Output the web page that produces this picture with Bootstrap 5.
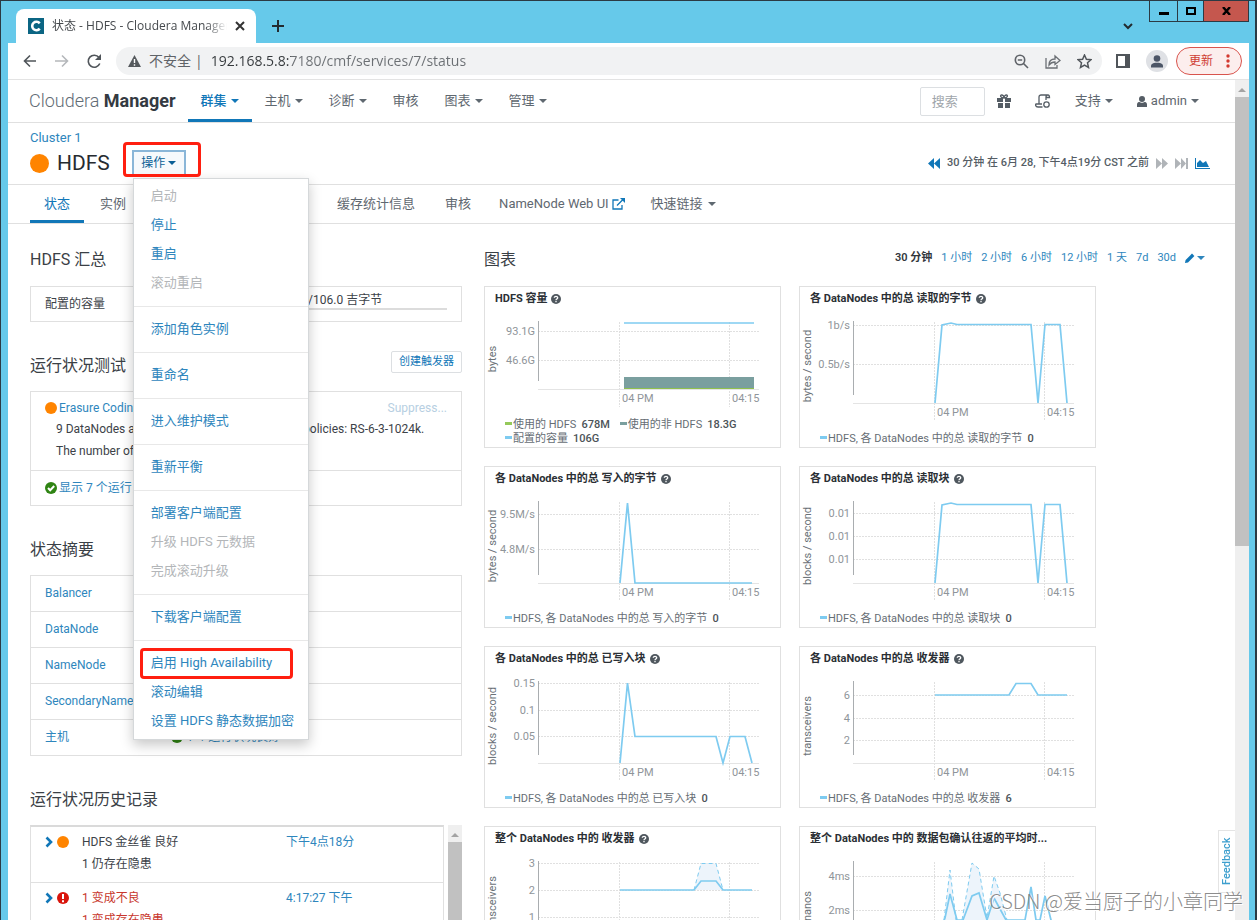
<!DOCTYPE html>
<html lang="zh-CN">
<head>
<meta charset="utf-8">
<meta name="viewport" content="width=device-width, initial-scale=1">
<title>状态 - HDFS - Cloudera Manager</title>
<link href="https://cdn.jsdelivr.net/npm/bootstrap@5.3.0/dist/css/bootstrap.min.css" rel="stylesheet">
<style>
  :root { --sky:#66c9ea; --cm-blue:#1177b8; --cm-link:#2e86bd; --line:#e0e0e0; --ink:#3c4248; --soft:#5f6870; }
  html, body { height:100%; }
  body { font-family:Roboto,"Noto Sans CJK SC",sans-serif; font-size:13px; line-height:20px; color:var(--ink); overflow:hidden; background:#1d2b3a; }
  a { color:var(--cm-link); text-decoration:none; }
  svg { display:block; flex:none; }
  button { font-family:inherit; }
  .win { height:100vh; background:var(--sky); border:solid #2b3a44; border-width:1px 2px 0 1px; padding:0 6px 0 7px; overflow:hidden; }
  .titlebar { height:42px; }
  .tab { width:240px; height:34px; background:#fff; border-radius:8px 8px 0 0; margin-left:8px; padding:0 11px 0 12px; font-family:"Open Sans","Noto Sans CJK SC",sans-serif; font-size:12px; color:#45494d; }
  .tab-title { overflow:hidden; white-space:nowrap; -webkit-mask-image:linear-gradient(90deg,#000 88%,transparent); mask-image:linear-gradient(90deg,#000 88%,transparent); }
  .plain { border:0; background:none; padding:0; color:inherit; line-height:1; }
  .winctl button { width:28px; height:21px; border:1px solid #2b3a44; border-top:0; border-right:0; background:none; padding:0; display:flex; align-items:center; justify-content:center; }
  .winctl .max-win { width:26px; }
  .winctl .close-win { width:46px; background:#c5574e; border-right:1px solid #2b3a44; }
  .toolbar { height:37px; background:#fff; border-bottom:1px solid #e3e3e3; color:#5f6368; padding:0 7px 0 15px; }
  .nav-btns { gap:18px; }
  .omnibox { height:28px; border-radius:14px; background:#f1f2f3; padding:0 10px 0 12px; margin:0 14px 0 14px; font-family:"Open Sans","Noto Sans CJK SC",sans-serif; font-size:14px; }
  .omnibox input { border:0; background:linear-gradient(90deg,#34383b 80px,#6b6f73 80px) text; -webkit-background-clip:text; background-clip:text; color:#55595d; -webkit-text-fill-color:transparent; padding:0; outline:0; min-width:0; }
  .avatar { width:22px; height:22px; border-radius:50%; background:#dfe1e5; }
  .update { height:28px; border:1px solid #d9544d; border-radius:14px; background:#fceeed; color:#cf3d34; font-size:12px; padding:0 11px 0 12px; gap:13px; }
  .page-area { height:calc(100vh - 80px); background:#fff; }
  .sheet { min-width:0; overflow:hidden; }
  .scroller { background:#efefef; width:14px; flex:none; }
  .scroller i { display:block; margin:5px 0 0 0; background:#c1c1c1; }
  .caret::after { content:""; display:inline-block; border:4px solid transparent; border-top-color:currentColor; border-bottom:0; vertical-align:2px; margin-left:5px; }
  .topnav { height:43px; border-bottom:1px solid var(--line); padding:0 36px 0 21px; }
  .brand { font-size:18px; color:#626c75; font-weight:300; margin-right:12px; }
  .brand b { color:#343a42; font-weight:700; }
  .topnav .nav-link, .subnav .nav-link { color:var(--soft); white-space:nowrap; border-bottom:3px solid transparent; }
  .topnav .nav-link { padding:11px 13px 8px; height:42px; }
  .topnav .caret::after { margin-left:4px; }
  .topnav .active, .subnav .active { color:var(--cm-blue); border-bottom-color:var(--cm-blue); }
  .topnav .nav-link.active { font-weight:500; }
  .search { width:65px; height:29px; border:1px solid #dcdfe2; border-radius:2px; padding:0 11px; font-size:13px; }
  .search::placeholder { color:#a0a6ab; }
  .util { color:var(--soft); }
  .svc-head { height:62px; border-bottom:1px solid var(--line); padding:5px 25px 0 22px; }
  .svc-row { margin-top:2px; }
  .dot { display:inline-block; border-radius:50%; background:#ff8400; flex:none; }
  .dot-lg { width:19px; height:19px; }
  .dot-sm { width:12px; height:12px; }
  .svc-title { font-size:21px; line-height:24px; font-weight:400; color:#262b30; margin:0 0 0 8px; }
  .act { height:26px; width:54px; border:2px solid #8ab6d8; background:#f6f9fc; color:#0b5f96; font-size:12px; line-height:20px; padding:0; margin-left:22px; white-space:nowrap; }
  .act::after { margin-left:3px; }
  .act-wrap { position:relative; }
  .mark-red { position:absolute; border:3px solid #ff1f10; border-radius:4px; pointer-events:none; z-index:1100; }
  .mark-act { left:13px; right:-15px; top:-8px; height:35px; }
  .mark-ha { left:6px; right:15px; top:-1px; bottom:-1px; }
  .act-menu { display:block; position:absolute; left:23px; top:28px; width:176px; padding:3px 0; margin:0; border:1px solid #d5d8da; border-radius:0; font-size:13px; box-shadow:0 5px 12px rgba(0,0,0,.22); }
  .act-menu .dropdown-item { color:var(--cm-link); padding:4px 17px 5px; line-height:20px; }
  .act-menu .disabled { color:#b3b6b9; }
  .act-menu .dropdown-divider { margin:8px 0; border-color:#e8e8e8; opacity:1; }
  .span-now { font-size:11px; font-weight:500; color:#555d65; gap:7px; padding-top:25px; }
  .subnav { height:39px; border-bottom:1px solid var(--line); padding-left:22px; column-gap:2px; }
  .subnav .nav-link { padding:9px 14px 6px; height:38px; }
  .subnav .ext { padding-left:12px; padding-right:10px; }
  .ext svg { margin:4px 0 0 3px; }
  .cols { display:grid; grid-template-columns:minmax(0,432fr) minmax(0,726fr); column-gap:22px; padding:0 25px 0 22px; }
  .sec { font-size:16px; line-height:24px; font-weight:400; margin:0; color:#3a4046; }
  .sec-row { height:62px; padding-top:24px; }
  .sec-row-next { height:69px; padding-bottom:13px; }
  .pane { border:1px solid var(--line); font-size:12px; }
  .cap { height:36px; padding:0 14px; }
  .capbar { height:2px; background:#dcdcdc; margin-top:-1px; }
  .cap-val { width:208px; line-height:18px; }
  .trig { border:1px solid #dcdfe2; border-radius:2px; background:#fff; color:var(--cm-blue); font-size:11px; height:22px; padding:0 7px; line-height:18px; margin-bottom:5px; }
  .tests > div { padding:6px 14px 8px; }
  .tests > div + div { border-top:1px solid var(--line); height:35px; padding:6px 14px; }
  .tests p { line-height:22px; margin:0; padding-left:11px; white-space:nowrap; }
  .tests .dot-sm, .tests svg { margin-right:2px; }
  .suppress { color:#b7cfe2; }
  .roles { margin:0; font-size:12px; border:1px solid var(--line); table-layout:fixed; }
  .roles td, .roles th { height:36px; padding:7px 14px 8px; font-weight:400; border-bottom:1px solid var(--line); }
  .roles tr > :first-child { width:126px; }
  .events { border:1px solid var(--line); border-top:2px solid #dadada; font-size:12px; line-height:22px; }
  .events > div { padding:4px 14px 7px; height:56px; border-bottom:1px solid var(--line); }
  .ev-icons { width:37px; padding-top:5px; }
  .ev-text { width:204px; }
  .bad { color:#c8372d; }
  .tiles { gap:18px; }
  .tile { flex:0 0 297px; height:162px; border:1px solid var(--line); overflow:hidden; }
  .tile h3 { font-size:11px; line-height:24px; height:24px; margin:0; padding-left:10px; font-weight:700; color:#2b3035; }
  .tile svg text { font-size:11px; fill:#8f959a; }
  .tile svg .unit { fill:#6b7278; }
  .legend-row { font-size:11px; line-height:14px; padding:1px 8px 0 20px; color:#666d74; flex-wrap:wrap; column-gap:10px; }
  .legend-row i { width:7px; height:3px; display:inline-block; margin-right:1px; vertical-align:3px; }
  .legend-row b { margin-left:5px; font-weight:500; color:#4c5358; }
  .ranges { font-size:11px; gap:9px; padding-right:5px; }
  .ranges .caret::after { margin-left:2px; }
  .ranges strong { font-weight:600; color:#32373c; }
  .feedback { position:absolute; right:22px; top:830px; width:17px; height:63px; border:1px solid #e4e4e4; border-left:0; background:#fff; color:#3d9fce; font-size:11px; font-weight:500; writing-mode:vertical-rl; transform:rotate(180deg); padding:0; line-height:16px; text-align:center; }
  .watermark { position:absolute; right:14px; bottom:6px; font:300 20px/26px "Noto Sans CJK SC",sans-serif; color:rgba(110,110,110,.8); text-shadow:1px 1px 0 #fff; white-space:nowrap; }
</style>
</head>
<body>
<div class="win">
  <header class="titlebar d-flex">
    <div class="tab d-flex align-items-center align-self-end">
      <svg width="16" height="16" viewBox="0 0 16 16"><rect width="16" height="16" fill="#0b6583"/><path d="M11.7 10.6A4.2 4.2 0 1 1 11.7 5.4" fill="none" stroke="#fff" stroke-width="2.6"/></svg>
      <span class="tab-title flex-fill ms-2">状态 - HDFS - Cloudera Manager</span>
      <button class="plain ms-2" aria-label="关闭标签页"><svg width="10" height="10"><path d="M1 1l8 8M9 1L1 9" stroke="#333" stroke-width="2"/></svg></button>
    </div>
    <button class="plain ms-3 pt-2" aria-label="新标签页"><svg width="12" height="12"><path d="M6 0v12M0 6h12" stroke="#222b30" stroke-width="2"/></svg></button>
    <button class="plain ms-auto me-3 pt-2" aria-label="搜索标签页"><svg width="10" height="7"><path d="M1 1l4 4 4-4" fill="none" stroke="#222b30" stroke-width="2"/></svg></button>
    <div class="winctl d-flex align-items-start">
      <button aria-label="最小化"><svg width="10" height="8"><rect y="5" width="10" height="3"/></svg></button>
      <button class="max-win" aria-label="最大化"><svg width="10" height="8"><rect x="1" y="1" width="8" height="6" fill="none" stroke="#000" stroke-width="2"/></svg></button>
      <button class="close-win" aria-label="关闭"><svg width="9" height="8"><path d="M1 0l7 8M8 0L1 8" stroke="#000" stroke-width="2.4"/></svg></button>
    </div>
  </header>
  <div class="toolbar d-flex align-items-center">
    <div class="nav-btns d-flex align-items-center">
      <button class="plain" aria-label="后退"><svg width="14" height="14" fill="none" stroke="#50555a" stroke-width="1.6"><path d="M13 7H2M7 1.500L1.500 7 7 12.500"/></svg></button>
      <button class="plain" aria-label="前进"><svg width="14" height="14" fill="none" stroke="#b5b8bb" stroke-width="1.600"><path d="M0 7h12M7 1.500L12.500 7 7 12.500"/></svg></button>
      <button class="plain" aria-label="刷新"><svg width="15" height="15" fill="none" stroke="#50555a" stroke-width="1.600"><path d="M12.800 9.500A6 6 0 1 1 12 3.500"/><path d="M14 0v6H8z" fill="#50555a" stroke="none"/></svg></button>
    </div>
    <div class="omnibox d-flex align-items-center flex-fill">
      <svg width="13" height="12"><path d="M6.500 0L13 12H0z" fill="#55595d"/><path d="M6.500 4v4M6.500 9.300v1.400" stroke="#fff" stroke-width="1.400"/></svg>
      <span class="ms-2">不安全</span><span class="mx-1">|</span>
      <input class="flex-fill ms-1" aria-label="地址" value="192.168.5.8:7180/cmf/services/7/status">
      <svg width="15" height="15" fill="none" stroke="#5f6368" stroke-width="1.600"><circle cx="6" cy="6" r="4.700"/><path d="M9.500 9.500L14 14M3.800 6h4.400"/></svg>
      <svg class="ms-3" width="16" height="15" fill="none" stroke="#6b6f74" stroke-width="1.300"><path d="M1 4v10h11v-3M4 11c0-4 2-6 6-6V2l5 4.500-5 4V8C7 8 5.500 9 4 11z"/></svg>
      <svg class="ms-3" width="15" height="15" viewBox="0 0 15 15"><path d="M7.500 1l1.900 4.300 4.600.4-3.500 3.100 1 4.600-4-2.400-4 2.400 1-4.600L1 5.700l4.600-.4z" fill="none" stroke="#50555a" stroke-width="1.500"/></svg>
    </div>
    <svg width="14" height="14"><rect x="1" y="1" width="12" height="12" fill="none" stroke="#50555a" stroke-width="2"/><rect x="9" y="1" width="4" height="12" fill="#50555a"/></svg>
    <span class="avatar ms-3 me-2 d-flex align-items-center justify-content-center"><svg width="14" height="13" fill="#4b5566"><circle cx="7" cy="3.500" r="3.300"/><path d="M1 12.500V11c0-3 4-3.300 6-3.300s6 .3 6 3.300v1.500z"/></svg></span>
    <button class="update d-flex align-items-center">更新 <svg width="4" height="14" fill="#d33a30"><circle cx="2" cy="2" r="1.700"/><circle cx="2" cy="7" r="1.700"/><circle cx="2" cy="12" r="1.700"/></svg></button>
  </div>
  <div class="page-area d-flex">
    <main class="sheet flex-fill">
      <nav class="topnav d-flex align-items-center">
        <a class="brand text-nowrap" href="#">Cloudera <b>Manager</b></a>
        <div class="nav flex-nowrap">
          <a class="nav-link caret active" href="#">群集</a><a class="nav-link caret" href="#">主机</a><a class="nav-link caret" href="#">诊断</a><a class="nav-link" href="#">审核</a><a class="nav-link caret" href="#">图表</a><a class="nav-link caret" href="#">管理</a>
        </div>
        <input class="search ms-auto" type="search" placeholder="搜索" aria-label="搜索">
        <a href="#" class="util ms-2 ps-1" aria-label="新功能"><svg width="14" height="14" fill="#555d65"><path d="M0 4h6v4H0zM8 4h6v4H8zM1 9h5v5H1zM8 9h5v5H8z"/><path d="M7 4C3 4 3 1 4.500 1S7 2.500 7 4c0-1.500 1-3 2.500-3S11 4 7 4z" fill="none" stroke="#555d65" stroke-width="1.300"/></svg></a>
        <a href="#" class="util ms-4" aria-label="运行命令"><svg width="16" height="15" fill="none" stroke="#555d65" stroke-width="1.300"><path d="M4 10V3c0-1.500 1-2 2-2h7c-1.500 0-2 1-2 2v3M11 3.500h3.500C14.500 2 14 1 13 1M7.500 13H3c-3 0-2.500-3-2-3h6"/><circle cx="11.500" cy="10.500" r="2.700"/></svg></a>
        <a href="#" class="util caret ms-4 text-nowrap">支持</a>
        <a href="#" class="util caret ms-4 text-nowrap d-flex align-items-center"><svg class="me-1" width="10" height="11" fill="#555d65"><circle cx="5" cy="3" r="3"/><path d="M0 11V8.500C0 6.500 1.500 6 2.500 6c1 1 4 1 5 0 1 0 2.500.5 2.500 2.500V11z"/></svg>admin</a>
      </nav>
      <div class="svc-head d-flex justify-content-between">
        <div>
          <a href="#" class="d-block">Cluster 1</a>
          <div class="svc-row d-flex align-items-center">
            <span class="dot dot-lg"></span><h1 class="svc-title">HDFS</h1>
            <div class="act-wrap">
              <button class="act caret" aria-expanded="true">操作</button>
              <span class="mark-red mark-act"></span>
              <div class="dropdown-menu act-menu">
                <a class="dropdown-item disabled" href="#">启动</a>
                <a class="dropdown-item" href="#">停止</a>
                <a class="dropdown-item" href="#">重启</a>
                <a class="dropdown-item disabled" href="#">滚动重启</a>
                <hr class="dropdown-divider">
                <a class="dropdown-item" href="#">添加角色实例</a>
                <hr class="dropdown-divider">
                <a class="dropdown-item" href="#">重命名</a>
                <hr class="dropdown-divider">
                <a class="dropdown-item" href="#">进入维护模式</a>
                <hr class="dropdown-divider">
                <a class="dropdown-item" href="#">重新平衡</a>
                <hr class="dropdown-divider">
                <a class="dropdown-item" href="#">部署客户端配置</a>
                <a class="dropdown-item disabled" href="#">升级 HDFS 元数据</a>
                <a class="dropdown-item disabled" href="#">完成滚动升级</a>
                <hr class="dropdown-divider">
                <a class="dropdown-item" href="#">下载客户端配置</a>
                <hr class="dropdown-divider">
                <div class="position-relative"><a class="dropdown-item" href="#">启用 High Availability</a><span class="mark-red mark-ha"></span></div>
                <a class="dropdown-item" href="#">滚动编辑</a>
                <a class="dropdown-item" href="#">设置 HDFS 静态数据加密</a>
              </div>
            </div>
          </div>
        </div>
        <div class="span-now d-flex align-items-center align-self-start">
          <svg width="12" height="11" fill="#1177b8"><path d="M6 0v11L0 5.500zM12 0v11L6 5.500z"/></svg>
          <span>30 分钟 在 6月 28, 下午4点19分 CST 之前</span>
          <svg width="12" height="11" fill="#b0b4b8"><path d="M0 0v11l6-5.500zM6 0v11l6-5.500z"/></svg>
          <svg width="13" height="11" fill="#b0b4b8"><path d="M0 0v11l6-5.500zM6 0v11l5-5.500zM11 0h2v11h-2z"/></svg>
          <svg width="15" height="11" fill="#1177b8"><path d="M0 0h1v10h14v1H0zM2 9V5l3-3 3 3 3-2 3 6z"/></svg>
        </div>
      </div>
      <nav class="subnav nav flex-nowrap">
        <a class="nav-link active" href="#">状态</a><a class="nav-link" href="#">实例</a><a class="nav-link" href="#">配置</a><a class="nav-link" href="#">命令</a><a class="nav-link" href="#">图表库</a><a class="nav-link" href="#">缓存统计信息</a><a class="nav-link" href="#">审核</a>
        <a class="nav-link ext d-flex" href="#">NameNode Web UI <svg width="13" height="12" fill="none" stroke="#1177b8" stroke-width="1.300"><path d="M6.500 2H1v9h9V7M5 7.500L11.500 1"/><path d="M8 0h5v5z" fill="#1177b8" stroke="none"/></svg></a>
        <a class="nav-link caret" href="#">快速链接</a>
      </nav>
      <div class="cols">
        <section>
          <div class="sec-row"><h2 class="sec">HDFS 汇总</h2></div>
          <div class="pane cap d-flex justify-content-between align-items-center"><span>配置的容量</span><div class="cap-val align-self-start pt-1"><span>678.4 兆字节/106.0 吉字节</span><div class="capbar"></div></div></div>
          <div class="sec-row-next d-flex justify-content-between align-items-end"><h2 class="sec">运行状况测试</h2><button class="trig">创建触发器</button></div>
          <div class="pane tests">
            <div>
              <div class="d-flex align-items-center"><span class="dot dot-sm"></span><a href="#">Erasure Coding 策略验证测试</a><a href="#" class="suppress ms-auto">Suppress...</a></div>
              <p>9 DataNodes are required with the enabled EC policies: RS-6-3-1024k.</p>
              <p>The number of DataNodes is 3.</p>
            </div>
            <div class="d-flex align-items-center"><svg width="12" height="12"><circle cx="6" cy="6" r="6" fill="#2f8413"/><path d="M3 6l2.200 2.300L9.200 4" fill="none" stroke="#fff" stroke-width="2"/></svg><a href="#">显示 7 个运行良好</a></div>
          </div>
          <div class="sec-row-next d-flex align-items-end"><h2 class="sec">状态摘要</h2></div>
          <table class="roles w-100"><tbody>
            <tr><th scope="row"><a href="#">Balancer</a></th><td></td></tr>
            <tr><th scope="row"><a href="#">DataNode</a></th><td></td></tr>
            <tr><th scope="row"><a href="#">NameNode</a></th><td></td></tr>
            <tr><th scope="row"><a href="#">SecondaryNameNode</a></th><td></td></tr>
            <tr><th scope="row"><a href="#">主机</a></th><td><a href="#" class="d-flex align-items-center"><svg class="me-1" width="12" height="12"><circle cx="6" cy="6" r="6" fill="#2f8413"/></svg>1 个运行状况良好</a></td></tr>
          </tbody></table>
          <div class="sec-row-next d-flex align-items-end"><h2 class="sec">运行状况历史记录</h2></div>
          <div class="d-flex">
            <div class="events flex-fill">
              <div class="d-flex"><span class="ev-icons d-flex align-items-start"><svg width="8" height="12"><path d="M1.500 1.500L6 6l-4.500 4.500" fill="none" stroke="#1177b8" stroke-width="2.600"/></svg><span class="dot dot-sm ms-1"></span></span><span class="ev-text">HDFS 金丝雀 良好<br>1 仍存在隐患</span><a href="#">下午4点18分</a></div>
              <div class="d-flex"><span class="ev-icons d-flex align-items-start"><svg width="8" height="12"><path d="M1.500 1.500L6 6l-4.500 4.500" fill="none" stroke="#1177b8" stroke-width="2.600"/></svg><svg class="ms-1" width="12" height="12"><circle cx="6" cy="6" r="6" fill="#d9150c"/><path d="M6 2v5M6 8.300v2" stroke="#fff" stroke-width="2"/></svg></span><span class="ev-text bad">1 变成不良<br>1 变成存在隐患</span><a href="#">4:17:27 下午</a></div>
            </div>
            <div class="scroller ms-1 d-flex flex-column align-items-center"><svg class="mt-2" width="8" height="4"><path d="M4 0l4 4H0z" fill="#a3a3a3"/></svg><i class="flex-fill w-100"></i></div>
          </div>
        </section>
        <section>
          <div class="sec-row d-flex justify-content-between align-items-start"><h2 class="sec">图表</h2>
            <div class="ranges d-flex text-nowrap"><strong>30 分钟</strong><a href="#">1 小时</a><a href="#">2 小时</a><a href="#">6 小时</a><a href="#">12 小时</a><a href="#">1 天</a><a href="#">7d</a><a href="#">30d</a><a href="#" class="caret d-flex align-items-center" aria-label="编辑"><svg width="10" height="10" fill="#1177b8"><path d="M0 10l.6-3L7 .6 9.400 3 3 9.400z"/></svg></a></div>
          </div>
          <div class="tiles d-flex flex-wrap" id="tiles"></div>
        </section>
      </div>
    </main>
    <div class="scroller d-flex flex-column align-items-center"><svg class="mt-2" width="8" height="4"><path d="M4 0l4 4H0z" fill="#a3a3a3"/></svg><i class="w-100" style="height:449px"></i></div>
  </div>
</div>
<button class="feedback">Feedback</button>
<div class="watermark">CSDN @爱当厨子的小章同学</div>
<script src="https://cdn.jsdelivr.net/npm/bootstrap@5.3.0/dist/js/bootstrap.bundle.min.js"></script>
<script>
  const BLUE = '#7ecbf0';
  const reads = '136,117 143,39 152,37 158,38.5 232,38.5 239,117 246,38.5 261,38.5 268,117';
  const charts = [
    { title:'HDFS 容量', unit:'bytes', mid:73, base:103, y:[['93.1G',45],['46.6G',74]],
      extra:'<rect x="140" y="91" width="130" height="11" fill="#7a9f9f"/><path d="M140 102.500h130" stroke="#8fc04e"/>',
      line:'140,37 270,37', legend:[['#95c95a','使用的 HDFS','678M'],['#7a9f9f','使用的非 HDFS','18.3G'],[BLUE,'配置的容量','106G']] },
    { title:'各 DataNodes 中的总 读取的字节', unit:'bytes / second', y:[['1b/s',39],['0.5b/s',78]], line:reads, val:'0' },
    { title:'各 DataNodes 中的总 写入的字节', unit:'bytes / second', y:[['9.5M/s',48],['4.8M/s',83]], line:'136,117 143.500,37 151,117 268,117', val:'0' },
    { title:'各 DataNodes 中的总 读取块', unit:'blocks / second', y:[['0.01',47],['0.01',70],['0.01',93]], line:reads, val:'0' },
    { title:'各 DataNodes 中的总 已写入块', unit:'blocks / second', y:[['0.15',37],['0.1',64],['0.05',90]], line:'136,117 143.500,37 151,90.500 232,90.500 239,117 246,90.500 261,90.500 268,117', val:'0' },
    { title:'各 DataNodes 中的总 收发器', unit:'transceivers', y:[['6',49],['4',72],['2',94]], line:'136,49 210,49 217,37.500 232,37.500 239,49 268,49', val:'6' },
    { title:'整个 DataNodes 中的 收发器', unit:'transceivers', y:[['3',37],['2',64],['1',91]], line:'136,64 210,64 217,55 232,55 239,64 268,64', band:['210,64 217,37.500 232,37.500 239,64'], val:'2' },
    { title:'整个 DataNodes 中的 数据包确认往返的平均时...', nohelp:true, unit:'nanos', y:[['4ms',50],['2ms',84]],
      line:'136,117 146,92 151,68 158,94 164,94 173,70 180,67 188,94 195,72 207,94 226,94 232,61 237,94 241,94 246,70 252,94 268,117',
      band:['145,94 151,44 157,94','163,94 173,37 180,43 188,92 195,50 201,67 208,94'], val:'0' }
  ];
  const help = '<svg class="ms-1" width="10" height="10"><circle cx="5" cy="5" r="5" fill="#4f575e"/><path d="M3.300 3.800c0-2 3.400-2 3.400 0C6.700 5 5 5 5 6.200M5 7v1.300" fill="none" stroke="#fff" stroke-width="1.300"/></svg>';
  document.getElementById('tiles').innerHTML = charts.map(c => {
    const base = c.base || 117, rows = c.base ? 106 : 120, mid = c.mid || 80;
    const legend = c.legend || [[BLUE, 'HDFS, ' + c.title, c.val]];
    return `<article class="tile d-flex flex-column"><h3 class="d-flex align-items-center text-nowrap">${c.title}${c.nohelp ? '' : help}</h3>
      <svg width="295" height="${rows}" viewBox="1 25 295 ${rows}">
        <g stroke="#e0e0e0" stroke-dasharray="2 1">${c.y.map(t => `<path d="M54 ${t[1]}.500h221"/>`).join('')}<path d="M135.500 36V${base + 18}M245.500 36V${base + 18}"/></g>
        <path d="M54 ${base}.500h221" stroke="#e4e4e4"/><path d="M54.500 35V${base - 8}" stroke="#a9adb0"/>
        ${(c.band || []).map(b => `<polygon points="${b}" fill="#edf4fb"/><polyline points="${b}" fill="none" stroke="${BLUE}" stroke-dasharray="4 3"/>`).join('')}
        ${c.extra || ''}<polyline points="${c.line}" fill="none" stroke="${BLUE}" stroke-width="1.700"/>
        ${c.y.map(t => `<text x="51" y="${t[1] + 4}" text-anchor="end">${t[0]}</text>`).join('')}
        <text x="138" y="${base + 13}">04 PM</text><text x="248" y="${base + 13}">04:15</text>
        <text class="unit" transform="translate(12 ${mid}) rotate(-90)" text-anchor="middle">${c.unit}</text>
      </svg>
      <div class="legend-row d-flex">${legend.map(l => `<span><i style="background:${l[0]}"></i>${l[1]}<b>${l[2]}</b></span>`).join('')}</div></article>`;
  }).join('');
</script>
</body>
</html>
